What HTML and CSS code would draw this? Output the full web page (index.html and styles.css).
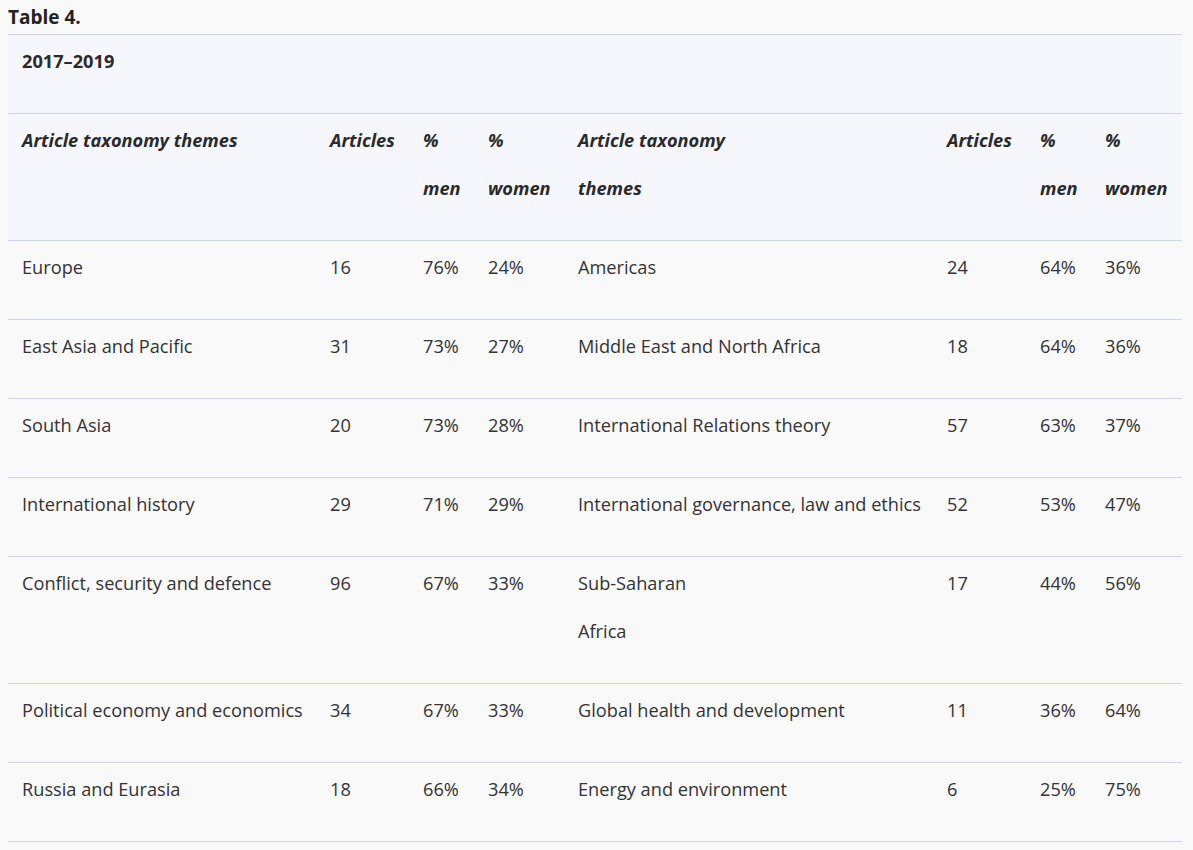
FILE: index.html
```html
<!DOCTYPE html>
<html lang="en">
<head>
<meta charset="utf-8">
<title>Table 4</title>
<link rel="stylesheet" href="styles.css">
</head>
<body>
<div class="table-wrap">
  <div class="table-label">Table 4.</div>
  <table class="data-table">
    <colgroup>
      <col class="c-theme"><col class="c-art"><col class="c-men"><col class="c-women">
      <col class="c-theme2"><col class="c-art"><col class="c-men"><col class="c-women2">
    </colgroup>
    <thead>
      <tr class="caption-row"><th colspan="8">2017–2019</th></tr>
      <tr class="head-row">
        <th>Article taxonomy themes</th>
        <th>Articles</th>
        <th>% men</th>
        <th>% women</th>
        <th>Article taxonomy<br>themes</th>
        <th>Articles</th>
        <th>% men</th>
        <th>% women</th>
      </tr>
    </thead>
    <tbody>
      <tr><td>Europe</td><td>16</td><td>76%</td><td>24%</td><td>Americas</td><td>24</td><td>64%</td><td>36%</td></tr>
      <tr><td>East Asia and Pacific</td><td>31</td><td>73%</td><td>27%</td><td>Middle East and North Africa</td><td>18</td><td>64%</td><td>36%</td></tr>
      <tr><td>South Asia</td><td>20</td><td>73%</td><td>28%</td><td>International Relations theory</td><td>57</td><td>63%</td><td>37%</td></tr>
      <tr><td>International history</td><td>29</td><td>71%</td><td>29%</td><td>International governance, law and ethics</td><td>52</td><td>53%</td><td>47%</td></tr>
      <tr><td>Conflict, security and defence</td><td>96</td><td>67%</td><td>33%</td><td>Sub-Saharan<br>Africa</td><td>17</td><td>44%</td><td>56%</td></tr>
      <tr><td>Political economy and economics</td><td>34</td><td>67%</td><td>33%</td><td>Global health and development</td><td>11</td><td>36%</td><td>64%</td></tr>
      <tr><td>Russia and Eurasia</td><td>18</td><td>66%</td><td>34%</td><td>Energy and environment</td><td>6</td><td>25%</td><td>75%</td></tr>
    </tbody>
  </table>
</div>
</body>
</html>
```
FILE: styles.css
```css
html, body {
  margin: 0;
  padding: 0;
  background: #f9f9fa;
}
body {
  font-family: "Open Sans", "Liberation Sans", sans-serif;
  color: #333;
}
.table-wrap {
  padding: 0 11px 0 8px;
}
.table-label {
  font-size: 19px;
  font-weight: 700;
  color: #222;
  line-height: 34px;
  height: 34px;
}
.data-table {
  width: 100%;
  border-collapse: collapse;
  table-layout: fixed;
  font-size: 18.2px;
}
.c-theme { width: 308px; }
.c-art { width: 93px; }
.c-men { width: 65px; }
.c-women { width: 90px; }
.c-theme2 { width: 369px; }
.c-women2 { width: 91px; }
.data-table th,
.data-table td {
  text-align: left;
  vertical-align: top;
  line-height: 48px;
  padding: 2px 10px 28px 14px;
  border-top: 1px solid #cfd4ea;
  border-bottom: 1px solid #cfd4ea;
}
.data-table td {
  white-space: nowrap;
}
.data-table th {
  font-weight: 700;
  color: #2a2a2a;
}
.head-row th {
  font-style: italic;
}
.data-table thead tr {
  background: #f5f7fc;
}
.caption-row th {
  color: #2a2a2a;
}
```
